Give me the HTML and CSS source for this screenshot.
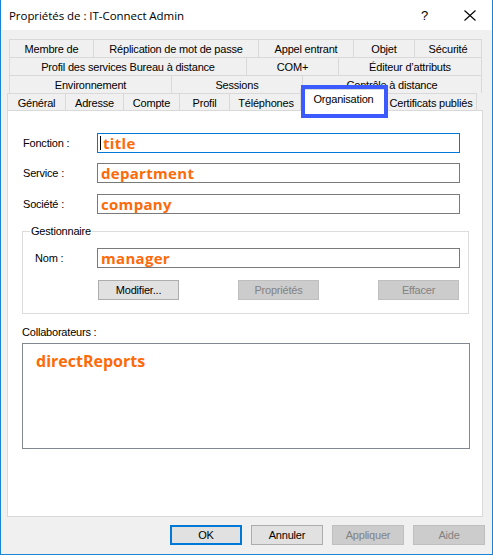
FILE: index.html
```html
<!DOCTYPE html>
<html lang="fr">
<head>
<meta charset="utf-8">
<title>Propriétés de : IT-Connect Admin</title>
<link rel="stylesheet" href="styles.css">
</head>
<body>
<div class="window">
  <div class="titlebar">
    <span class="title">Propriétés de : IT-Connect Admin</span>
    <span class="help">?</span>
    <span class="close"><svg width="12" height="11" viewBox="0 0 12 11"><path d="M0.5 0.5 L11.5 10.5 M11.5 0.5 L0.5 10.5" stroke="#000" stroke-width="1.1" fill="none"/></svg></span>
  </div>
  <div class="tabs">
    <div class="row r1">
      <div class="tab">Membre de</div>
      <div class="tab">Réplication de mot de passe</div>
      <div class="tab">Appel entrant</div>
      <div class="tab">Objet</div>
      <div class="tab last">Sécurité</div>
    </div>
    <div class="row r2">
      <div class="tab">Profil des services Bureau à distance</div>
      <div class="tab">COM+</div>
      <div class="tab last">Éditeur d’attributs</div>
    </div>
    <div class="row r3">
      <div class="tab">Environnement</div>
      <div class="tab">Sessions</div>
      <div class="tab last">Contrôle à distance</div>
    </div>
    <div class="row r4">
      <div class="tab">Général</div>
      <div class="tab">Adresse</div>
      <div class="tab">Compte</div>
      <div class="tab">Profil</div>
      <div class="tab">Téléphones</div>
      <div class="tab sel">Organisation</div>
      <div class="tab last">Certificats publiés</div>
    </div>
  </div>
  <div class="panel">
    <div class="frow first">
      <span class="label">Fonction :</span>
      <div class="field focus"><span class="caret"></span><span class="val">title</span></div>
    </div>
    <div class="frow">
      <span class="label">Service :</span>
      <div class="field"><span class="val">department</span></div>
    </div>
    <div class="frow third">
      <span class="label">Société :</span>
      <div class="field"><span class="val">company</span></div>
    </div>
    <div class="group">
      <span class="gtitle">Gestionnaire</span>
      <div class="grow">
        <span class="glabel">Nom :</span>
        <div class="field"><span class="val">manager</span></div>
      </div>
      <div class="gbuttons">
        <span class="btn">Modifier...</span>
        <span class="btn disabled">Propriétés</span>
        <span class="btn disabled">Effacer</span>
      </div>
    </div>
    <div class="clabel">Collaborateurs :</div>
    <div class="listbox"><span class="val big">directReports</span></div>
  </div>
  <div class="buttons">
    <span class="btn wide default">OK</span>
    <span class="btn wide">Annuler</span>
    <span class="btn wide disabled">Appliquer</span>
    <span class="btn wide disabled">Aide</span>
  </div>
  <div class="highlight"></div>
</div>
</body>
</html>
```

FILE: styles.css
```css
html, body {
  margin: 0;
  padding: 0;
}
body {
  width: 493px;
  height: 555px;
  font-family: "Liberation Sans", Arial, sans-serif;
  font-size: 11px;
  letter-spacing: -0.2px;
  color: #000;
}
.window {
  position: relative;
  box-sizing: border-box;
  width: 493px;
  height: 555px;
  background: #f0f0f0;
  border-left: 1px solid #1883d7;
  border-right: 1px solid #1883d7;
  border-bottom: 1px solid #1883d7;
}
.titlebar {
  height: 30px;
  background: #fff;
  display: flex;
  align-items: center;
}
.title {
  font-family: "Open Sans", "Noto Sans", sans-serif;
  font-size: 11.5px;
  padding-left: 8px;
  flex: 1;
  letter-spacing: -0.05px;
}
.help {
  font-family: "Liberation Sans", sans-serif;
  font-size: 13px;
  width: 20px;
  margin-right: 23px;
}
.close {
  display: flex;
  width: 12px;
  margin-right: 16px;
  margin-top: 1px;
}
.tabs {
  margin-top: 9px;
}
.row {
  display: grid;
  height: 18px;
}
.r1 { grid-template-columns: 84px 165px 95px 61px 68px; margin-left: 8px; width: 473px; }
.r2 { grid-template-columns: 237px 92px 144px; margin-left: 8px; width: 473px; }
.r3 { grid-template-columns: 162px 131px 180px; margin-left: 8px; width: 473px; }
.r4 {
  grid-template-columns: 58px 58px 56px 50px 73px 83px 92px;
  margin-left: 6px;
  height: 17px;
  position: relative;
  z-index: 1;
}
.tab {
  box-sizing: border-box;
  border-top: 1px solid #d9d9d9;
  border-left: 1px solid #d9d9d9;
  text-align: center;
  line-height: 18px;
  white-space: nowrap;
  overflow: hidden;
}
.tab.last {
  border-right: 1px solid #d9d9d9;
}
.tab.sel {
  background: #fff;
  margin: -4px -2px -1px -2px;
  border-right: 1px solid #d9d9d9;
  line-height: 18px;
  height: 22px;
}
.panel {
  box-sizing: border-box;
  margin-left: 6px;
  width: 476px;
  height: 407px;
  background: #fff;
  border: 1px solid #d9d9d9;
  padding-top: 22px;
}
.frow {
  display: flex;
  align-items: center;
  padding-left: 15px;
  margin-top: 10px;
}
.frow.first { margin-top: 0; }
.frow.third { margin-top: 11px; }
.label {
  width: 74px;
}
.field {
  box-sizing: border-box;
  width: 363px;
  height: 20px;
  border: 1px solid #7a7a7a;
  display: flex;
  align-items: center;
  padding-left: 3px;
}
.field.focus {
  border-color: #0078d7;
  padding-left: 2px;
}
.caret {
  width: 1px;
  height: 14px;
  background: #000;
  margin-right: 2px;
}
.val {
  font-family: "Open Sans", "Noto Sans", sans-serif;
  font-weight: 700;
  font-size: 15px;
  color: #fd6a0a;
  letter-spacing: 0.3px;
  line-height: 17px;
}
.val.big {
  font-size: 16px;
  letter-spacing: 0;
}
.group {
  box-sizing: border-box;
  margin-left: 14px;
  margin-top: 17px;
  width: 447px;
  height: 83px;
  border: 1px solid #dcdcdc;
}
.gtitle {
  display: inline-block;
  margin-top: -7px;
  margin-left: 7px;
  padding: 0 1px;
  line-height: 13px;
  background: #fff;
  vertical-align: top;
}
.grow {
  display: flex;
  align-items: center;
  margin-top: 4px;
  padding-left: 12px;
}
.glabel {
  width: 62px;
}
.gbuttons {
  display: flex;
  justify-content: space-between;
  margin-top: 12px;
  margin-left: 75px;
  width: 361px;
}
.btn {
  box-sizing: border-box;
  display: flex;
  align-items: center;
  justify-content: center;
  width: 81px;
  height: 20px;
  background: #e1e1e1;
  border: 1px solid #adadad;
}
.btn.disabled {
  background: #cccccc;
  border-color: #bfbfbf;
  color: #838383;
}
.btn.wide {
  width: 72px;
}
.btn.default {
  border: 2px solid #0078d7;
}
.clabel {
  margin-left: 14px;
  margin-top: 12px;
  line-height: 13px;
}
.listbox {
  box-sizing: border-box;
  margin-left: 14px;
  margin-top: 4px;
  width: 448px;
  height: 106px;
  border: 1px solid #828790;
  padding: 9px 0 0 13px;
}
.buttons {
  display: flex;
  justify-content: flex-end;
  gap: 9px;
  margin-top: 8px;
  padding-right: 7px;
}
.highlight {
  position: absolute;
  left: 300px;
  top: 85px;
  width: 87px;
  height: 33px;
  box-sizing: border-box;
  border: 4px solid #3b5bff;
  z-index: 2;
  pointer-events: none;
}
```
